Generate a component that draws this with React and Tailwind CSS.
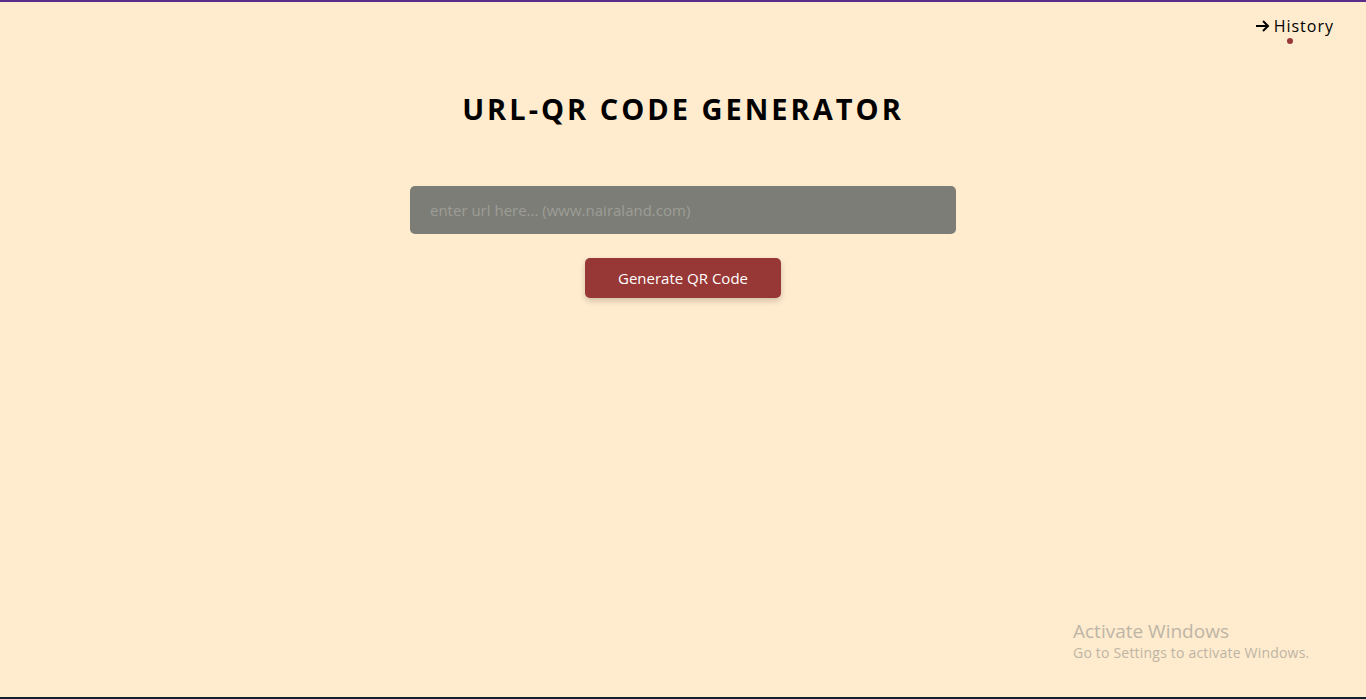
import React from "react";

export default function App() {
  return (
    <div
      className="relative flex h-[699px] w-full flex-col overflow-hidden bg-[#ffebcd]"
      style={{ fontFamily: '"Open Sans", "Noto Sans", sans-serif' }}
    >
      <div className="h-[2px] w-full bg-[#5a2d8a]" />
      <div className="flex justify-end pr-[32px] pt-[14px]">
        <div className="flex flex-col items-center">
          <a className="flex items-center gap-[4px] text-[16px] leading-[20px] tracking-[1px] text-black">
            <svg width="15" height="14" viewBox="0 0 15 14" fill="none" stroke="black" strokeWidth="2">
              <path d="M1 7h12M8 2l5 5-5 5" />
            </svg>
            History
          </a>
          <span className="mt-[2px] mr-[8px] h-[6px] w-[6px] rounded-full bg-[#983836]" />
        </div>
      </div>
      <h1 className="mt-[45px] text-center text-[29px] font-bold leading-[40px] tracking-[3px] text-black">
        URL-QR CODE GENERATOR
      </h1>
      <div className="mt-[57px] flex flex-col items-center">
        <input
          className="h-[48px] w-[546px] rounded-[5px] bg-[#7c7d76] px-[20px] text-[15px] text-white outline-none placeholder:text-[#9c9d96]"
          placeholder="enter url here... (www.nairaland.com)"
        />
        <button className="mt-[24px] h-[40px] w-[196px] rounded-[5px] bg-[#983836] text-[15px] text-white shadow-[0_3px_6px_rgba(0,0,0,0.18)]">
          Generate QR Code
        </button>
      </div>
      <div className="absolute left-[1073px] top-[619px] text-[#bdb5a6]">
        <div className="text-[19px] leading-[24px]">Activate Windows</div>
        <div className="text-[14px] leading-[20px] tracking-[0.2px]">Go to Settings to activate Windows.</div>
      </div>
      <div className="absolute bottom-0 left-0 h-[2px] w-full bg-[#13212a]" />
    </div>
  );
}
